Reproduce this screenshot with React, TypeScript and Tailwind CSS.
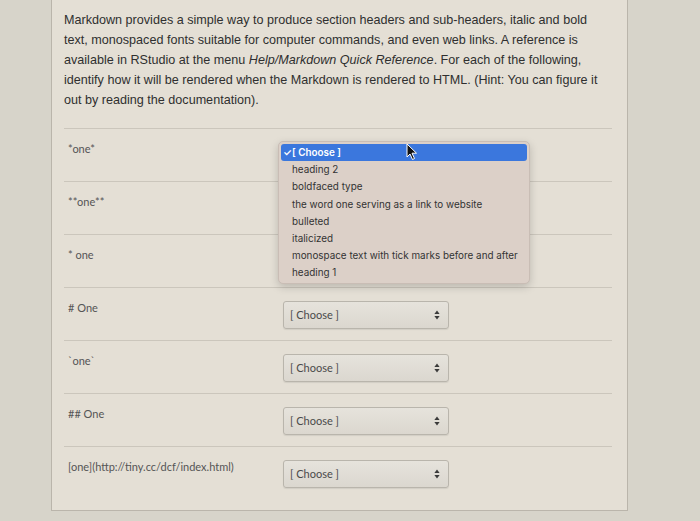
import React from "react"

const rows = [
  "*one*",
  "**one**",
  "* one",
  "# One",
  "`one`",
  "## One",
  "[one](http://tiny.cc/dcf/index.html)",
]

const options = [
  "heading 2",
  "boldfaced type",
  "the word one serving as a link to website",
  "bulleted",
  "italicized",
  "monospace text with tick marks before and after",
  "heading 1",
]

function Arrows() {
  return (
    <svg width="6" height="10" viewBox="0 0 6 10">
      <path d="M3 0.5 L5.6 4 H0.4 Z" fill="#3a3a3a" />
      <path d="M3 9.5 L5.6 6 H0.4 Z" fill="#3a3a3a" />
    </svg>
  )
}

function ChooseSelect({ hidden }: { hidden?: boolean }) {
  return (
    <div
      className={
        "mt-[13px] flex h-[28px] w-[166px] items-center justify-between rounded-[3px] border border-[#b9b5ac] bg-gradient-to-b from-[#e6e3dc] to-[#dbd7cf] pl-[6px] pr-[8px] shadow-[0_1px_1px_rgba(0,0,0,0.08)]" +
        (hidden ? " invisible" : "")
      }
    >
      <span className="font-['Lato'] text-[11px] text-[#4a4a4a]">[ Choose ]</span>
      <Arrows />
    </div>
  )
}

function Cursor() {
  return (
    <svg width="12" height="18" viewBox="0 0 12 18">
      <path
        d="M1 1 L1 14 L4 11 L6.5 16.5 L8.5 15.5 L6 10.2 L10.5 10.2 Z"
        fill="#111"
        stroke="#fff"
        strokeWidth="1"
        strokeLinejoin="round"
      />
    </svg>
  )
}

export default function App() {
  return (
    <div className="relative h-[521px] w-[700px] overflow-hidden bg-[#d7d4ca]">
      <div className="ml-[51px] h-[511px] w-[577px] border-x border-b border-[#bab5ab] bg-[#e4dfd5] pl-[12px] pr-[15px]">
        <p className="pt-[10px] font-['Liberation_Sans',sans-serif] text-[12.6px] leading-[20px] text-[#2f2f2f] whitespace-nowrap">
          Markdown provides a simple way to produce section headers and sub-headers, italic and bold
          <br />
          text, monospaced fonts suitable for computer commands, and even web links. A reference is
          <br />
          available in RStudio at the menu <i>Help/Markdown Quick Reference</i>. For each of the following,
          <br />
          identify how it will be rendered when the Markdown is rendered to HTML. (Hint: You can figure it
          <br />
          out by reading the documentation).
        </p>

        <div className="mt-[18px]">
          {rows.map((label, i) => (
            <div key={label} className="flex h-[53px] items-start border-t border-[#cbc6bc]">
              <div className="w-[219px] pl-[4px] pt-[13px] font-['Lato',sans-serif] text-[11px] leading-[14px] text-[#555]">
                {label}
              </div>
              {/* the first three selects sit under the open list */}
              <ChooseSelect hidden={i < 3} />
            </div>
          ))}
        </div>
      </div>

      {/* open dropdown for the first question */}
      <div className="absolute left-[278px] top-[141px] w-[252px] rounded-[5px] border border-[#c9bdb5] bg-[#dcd0c8] px-[2px] py-[2px] font-['Inter',sans-serif] text-[9.9px] text-[#333] shadow-[0_3px_8px_rgba(0,0,0,0.18)]">
        <div className="flex h-[17px] items-center rounded-[3px] bg-[#3b77dd] pl-[2px] font-semibold text-white">
          <span className="w-[9px] text-[10px]">✓</span>
          <span>[ Choose ]</span>
        </div>
        {options.map((o) => (
          <div key={o} className="flex h-[17.2px] items-center pl-[11px]">
            {o}
          </div>
        ))}
      </div>

      <div className="absolute left-[406px] top-[143px]">
        <Cursor />
      </div>
    </div>
  )
}
